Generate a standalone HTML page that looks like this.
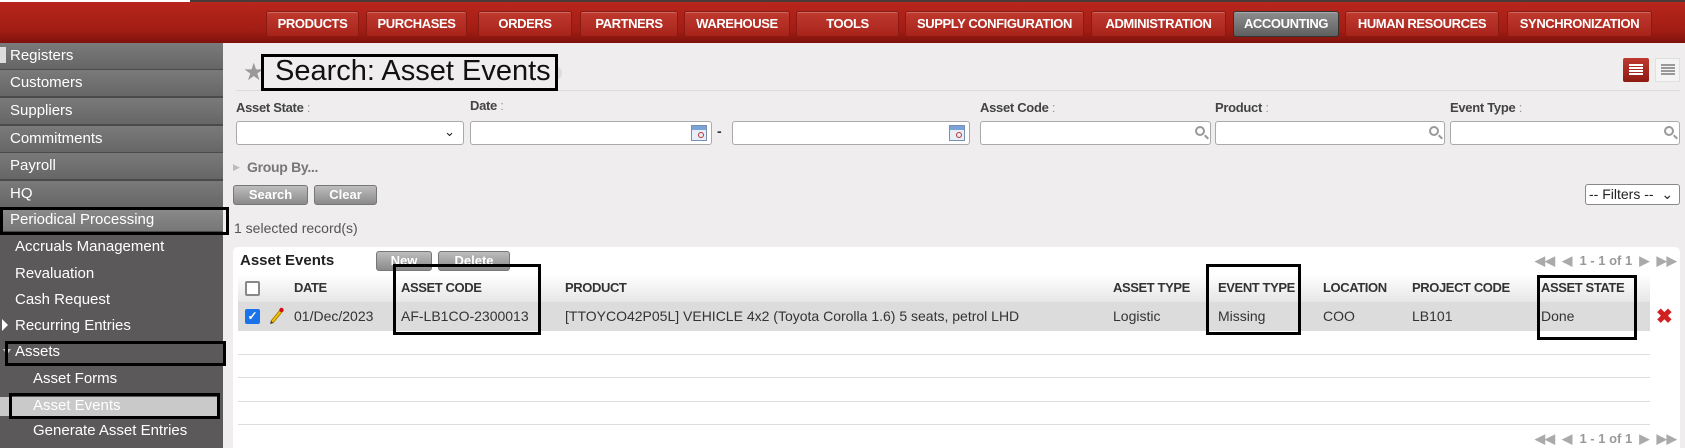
<!DOCTYPE html>
<html><head><meta charset="utf-8"><style>
*{box-sizing:border-box;margin:0;padding:0}
body{width:1685px;height:448px;overflow:hidden;background:#efedee;font-family:"Liberation Sans",Arial,sans-serif;position:relative}
.a{position:absolute;white-space:nowrap}
#hdr{left:0;top:0;width:1685px;height:43px;background:linear-gradient(#b8261c,#a11d14 70%,#7e120c);border-top:2px solid #4a3a3a}
.nb{position:absolute;top:9px;height:26px;border:1px solid #8a1a12;border-radius:3px;background:linear-gradient(#c0392f,#a8241b);color:#fff;font-weight:bold;font-size:13px;letter-spacing:-.4px;text-align:center;line-height:24px;box-shadow:inset 0 1px 0 rgba(255,255,255,.25)}
.nb.on{background:linear-gradient(#8e8e8e,#5f5f5f);border-color:#333}
#side{left:0;top:43px;width:223px;height:405px;background:#5b5959}
.si{position:absolute;left:0;width:223px;height:28px;background:linear-gradient(#7a7a7a,#666);border-bottom:2px solid #4a4a4a;color:#fff;font-size:15px;line-height:26px;padding-left:10px}
.sub{position:absolute;color:#fff;font-size:15px;line-height:20px}
.box{position:absolute;border:3px solid #000;z-index:5}
.lbl{font-weight:bold;font-size:13px;letter-spacing:-.3px;color:#444}
.lbl span{color:#999;font-weight:normal}
.inp{position:absolute;top:121px;height:24px;background:#fff;border:1px solid #aaa;border-radius:3px}
.mag{position:absolute;right:5px;top:4px;width:10px;height:10px;border:2px solid #999;border-radius:50%}
.mag:after{content:"";position:absolute;left:7px;top:8px;width:5px;height:2px;background:#999;transform:rotate(45deg)}
.cal{position:absolute;right:4px;top:3px;width:16px;height:16px;background:linear-gradient(#7aa3d8 0 4px,#e8eef5 4px);border:1px solid #7a8fb0}
.cal:after{content:"";position:absolute;right:2px;top:6px;width:4px;height:4px;border:1px solid #b33;border-radius:50%}
.gb{position:absolute;z-index:4;height:20px;border:1px solid #777;border-radius:3px;background:linear-gradient(#bdbdbd,#8a8a8a);color:#fff;font-weight:bold;font-size:13px;text-align:center;line-height:18px;overflow:visible}
.th{position:absolute;top:280px;font-weight:bold;font-size:13px;letter-spacing:-.4px;color:#333}
.td{position:absolute;top:308px;font-size:14px;color:#333}
.hl{position:absolute;left:238px;width:1412px;height:1px;background:#ddd}
.pg{position:absolute;font-size:13px;color:#aaa;font-weight:bold}
</style></head><body>
<div class="a" style="left:0;top:0;width:190px;height:2px;background:#fff;z-index:2"></div>
<div id="hdr" class="a">
<div class="nb" style="left:266px;width:93px">PRODUCTS</div>
<div class="nb" style="left:366px;width:101px">PURCHASES</div>
<div class="nb" style="left:478px;width:94px">ORDERS</div>
<div class="nb" style="left:580px;width:98px">PARTNERS</div>
<div class="nb" style="left:684px;width:106px">WAREHOUSE</div>
<div class="nb" style="left:796px;width:103px">TOOLS</div>
<div class="nb" style="left:905px;width:179px">SUPPLY CONFIGURATION</div>
<div class="nb" style="left:1091px;width:135px">ADMINISTRATION</div>
<div class="nb on" style="left:1233px;width:106px">ACCOUNTING</div>
<div class="nb" style="left:1345px;width:154px">HUMAN RESOURCES</div>
<div class="nb" style="left:1507px;width:145px">SYNCHRONIZATION</div>
</div>
<div id="side" class="a">
<div class="si" style="top:0">Registers</div>
<div class="si" style="top:27px">Customers</div>
<div class="si" style="top:55px">Suppliers</div>
<div class="si" style="top:83px">Commitments</div>
<div class="si" style="top:110px">Payroll</div>
<div class="si" style="top:138px">HQ</div>
<div class="si" style="top:166px;height:24px;line-height:22px;background:linear-gradient(#8a8a8a,#777)">Periodical Processing</div>
</div>
<div class="a" style="left:0;top:47px;width:6px;height:16px;background:#ddd"></div>
<div class="sub" style="left:15px;top:237px">Accruals Management</div>
<div class="sub" style="left:15px;top:264px">Revaluation</div>
<div class="sub" style="left:15px;top:290px">Cash Request</div>
<div class="a" style="left:2px;top:319px;width:0;height:0;border-left:6px solid #fff;border-top:6px solid transparent;border-bottom:6px solid transparent"></div>
<div class="sub" style="left:15px;top:316px">Recurring Entries</div>
<div class="a" style="left:3px;top:349px;width:0;height:0;border-top:6px solid #ccc;border-left:4px solid transparent;border-right:4px solid transparent"></div>
<div class="sub" style="left:15px;top:342px">Assets</div>
<div class="sub" style="left:33px;top:369px">Asset Forms</div>
<div class="a" style="left:0;top:397px;width:218px;height:19px;background:#c9c9c9"></div>
<div class="sub" style="left:33px;top:396px">Asset Events</div>
<div class="sub" style="left:33px;top:421px">Generate Asset Entries</div>
<div class="box" style="left:0;top:207px;width:229px;height:28px"></div>
<div class="box" style="left:5px;top:341px;width:221px;height:25px"></div>
<div class="box" style="left:9px;top:393px;width:211px;height:26px"></div>

<div class="a" style="left:243px;top:58px;font-size:24px;color:#999">★</div>
<div class="a" style="left:548px;top:66px;width:14px;height:14px;border-radius:50%;background:#ddd"></div>
<div class="box" style="left:261px;top:54px;width:297px;height:37px;background:#efedee;z-index:1"></div>
<div class="a" style="left:275px;top:55px;font-size:29px;color:#111;z-index:2">Search: Asset Events</div>
<div class="a" style="left:236px;top:90px;width:1444px;height:1px;background:#dcdcdc"></div>
<div class="a" style="left:1623px;top:58px;width:26px;height:24px;background:linear-gradient(#c0392f,#8e1a12);border-radius:2px"></div>
<div class="a" style="left:1629px;top:64px;width:14px;height:12px;background:repeating-linear-gradient(#fff 0 2px,transparent 2px 3px)"></div>
<div class="a" style="left:1655px;top:58px;width:25px;height:24px;background:#f4f4f4;border:1px solid #e0e0e0"></div>
<div class="a" style="left:1661px;top:64px;width:14px;height:11px;background:repeating-linear-gradient(#999 0 2px,transparent 2px 3px)"></div>

<div class="a lbl" style="left:236px;top:100px">Asset State <span>:</span></div>
<div class="a lbl" style="left:470px;top:98px">Date <span>:</span></div>
<div class="a lbl" style="left:980px;top:100px">Asset Code <span>:</span></div>
<div class="a lbl" style="left:1215px;top:100px">Product <span>:</span></div>
<div class="a lbl" style="left:1450px;top:100px">Event Type <span>:</span></div>
<div class="inp" style="left:236px;width:228px"><div class="a" style="right:8px;top:2px;font-size:13px;color:#222">⌄</div></div>
<div class="inp" style="left:470px;width:242px"><div class="cal"></div></div>
<div class="a" style="left:717px;top:123px;font-size:14px;color:#333;font-weight:bold">-</div>
<div class="inp" style="left:732px;width:238px"><div class="cal"></div></div>
<div class="inp" style="left:980px;width:231px"><div class="mag"></div></div>
<div class="inp" style="left:1215px;width:230px"><div class="mag"></div></div>
<div class="inp" style="left:1450px;width:230px"><div class="mag"></div></div>

<div class="a" style="left:233px;top:162px;font-size:9px;color:#bbb">▶</div>
<div class="a lbl" style="left:247px;top:159px;color:#777;font-size:14px">Group By...</div>
<div class="gb" style="left:233px;top:185px;width:75px">Search</div>
<div class="gb" style="left:314px;top:185px;width:63px">Clear</div>
<div class="a" style="left:1585px;top:184px;width:95px;height:21px;background:#fff;border:1px solid #888;border-radius:3px;font-size:14px;line-height:19px;padding-left:3px;color:#222">-- Filters --&nbsp;&nbsp;⌄</div>
<div class="a" style="left:234px;top:220px;font-size:14px;color:#555">1 selected record(s)</div>

<div class="a" style="left:233px;top:247px;width:1447px;height:201px;background:#fff;border-radius:5px 5px 0 0"></div>
<div class="a" style="left:240px;top:252px;font-size:15px;font-weight:bold;color:#222">Asset Events</div>
<div class="a" style="left:238px;top:274px;width:1412px;height:28px;background:linear-gradient(#fff,#e6e6e6)"></div>
<div class="a" style="left:238px;top:302px;width:1412px;height:29px;background:#dcdcdc"></div>
<div class="gb" style="left:376px;top:251px;width:56px">New</div>
<div class="gb" style="left:438px;top:251px;width:72px">Delete</div>
<div class="pg" style="left:1535px;top:253px">◀◀ &nbsp;◀&nbsp; <span style="color:#999">1 - 1 of 1</span> &nbsp;▶ &nbsp;▶▶</div>
<div class="a" style="left:245px;top:281px;width:15px;height:15px;border:2px solid #888;border-radius:2px;background:#fff"></div>
<div class="th" style="left:294px">DATE</div>
<div class="th" style="left:401px">ASSET CODE</div>
<div class="th" style="left:565px">PRODUCT</div>
<div class="th" style="left:1113px">ASSET TYPE</div>
<div class="th" style="left:1218px">EVENT TYPE</div>
<div class="th" style="left:1323px">LOCATION</div>
<div class="th" style="left:1412px">PROJECT CODE</div>
<div class="th" style="left:1541px">ASSET STATE</div>
<div class="a" style="left:245px;top:309px;width:15px;height:15px;background:#1a73e8;border-radius:2px;color:#fff;font-size:12px;line-height:15px;text-align:center;font-weight:bold">✓</div>
<svg class="a" style="left:268px;top:306px" width="16" height="18" viewBox="0 0 16 18"><path d="M3 15 L12 4 L14 6 L5 17 Z" fill="#f2c200" stroke="#a07000" stroke-width=".8"/><circle cx="13.5" cy="4" r="2.2" fill="#d01010"/><path d="M3 15 L2 18 L5 17Z" fill="#333"/></svg>
<div class="td" style="left:294px">01/Dec/2023</div>
<div class="td" style="left:401px">AF-LB1CO-2300013</div>
<div class="td" style="left:565px">[TTOYCO42P05L] VEHICLE 4x2 (Toyota Corolla 1.6) 5 seats, petrol LHD</div>
<div class="td" style="left:1113px">Logistic</div>
<div class="td" style="left:1218px">Missing</div>
<div class="td" style="left:1323px">COO</div>
<div class="td" style="left:1412px">LB101</div>
<div class="td" style="left:1541px">Done</div>
<div class="a" style="left:1656px;top:304px;font-size:20px;font-weight:bold;color:#d02020">✖</div>
<div class="hl" style="top:354px"></div><div class="hl" style="top:377px"></div><div class="hl" style="top:401px"></div><div class="hl" style="top:424px"></div>
<div class="pg" style="left:1535px;top:431px">◀◀ &nbsp;◀&nbsp; <span style="color:#999">1 - 1 of 1</span> &nbsp;▶ &nbsp;▶▶</div>
<div class="box" style="left:393px;top:264px;width:148px;height:71px"></div>
<div class="box" style="left:1206px;top:264px;width:95px;height:71px"></div>
<div class="box" style="left:1537px;top:275px;width:100px;height:65px"></div>
</body></html>
